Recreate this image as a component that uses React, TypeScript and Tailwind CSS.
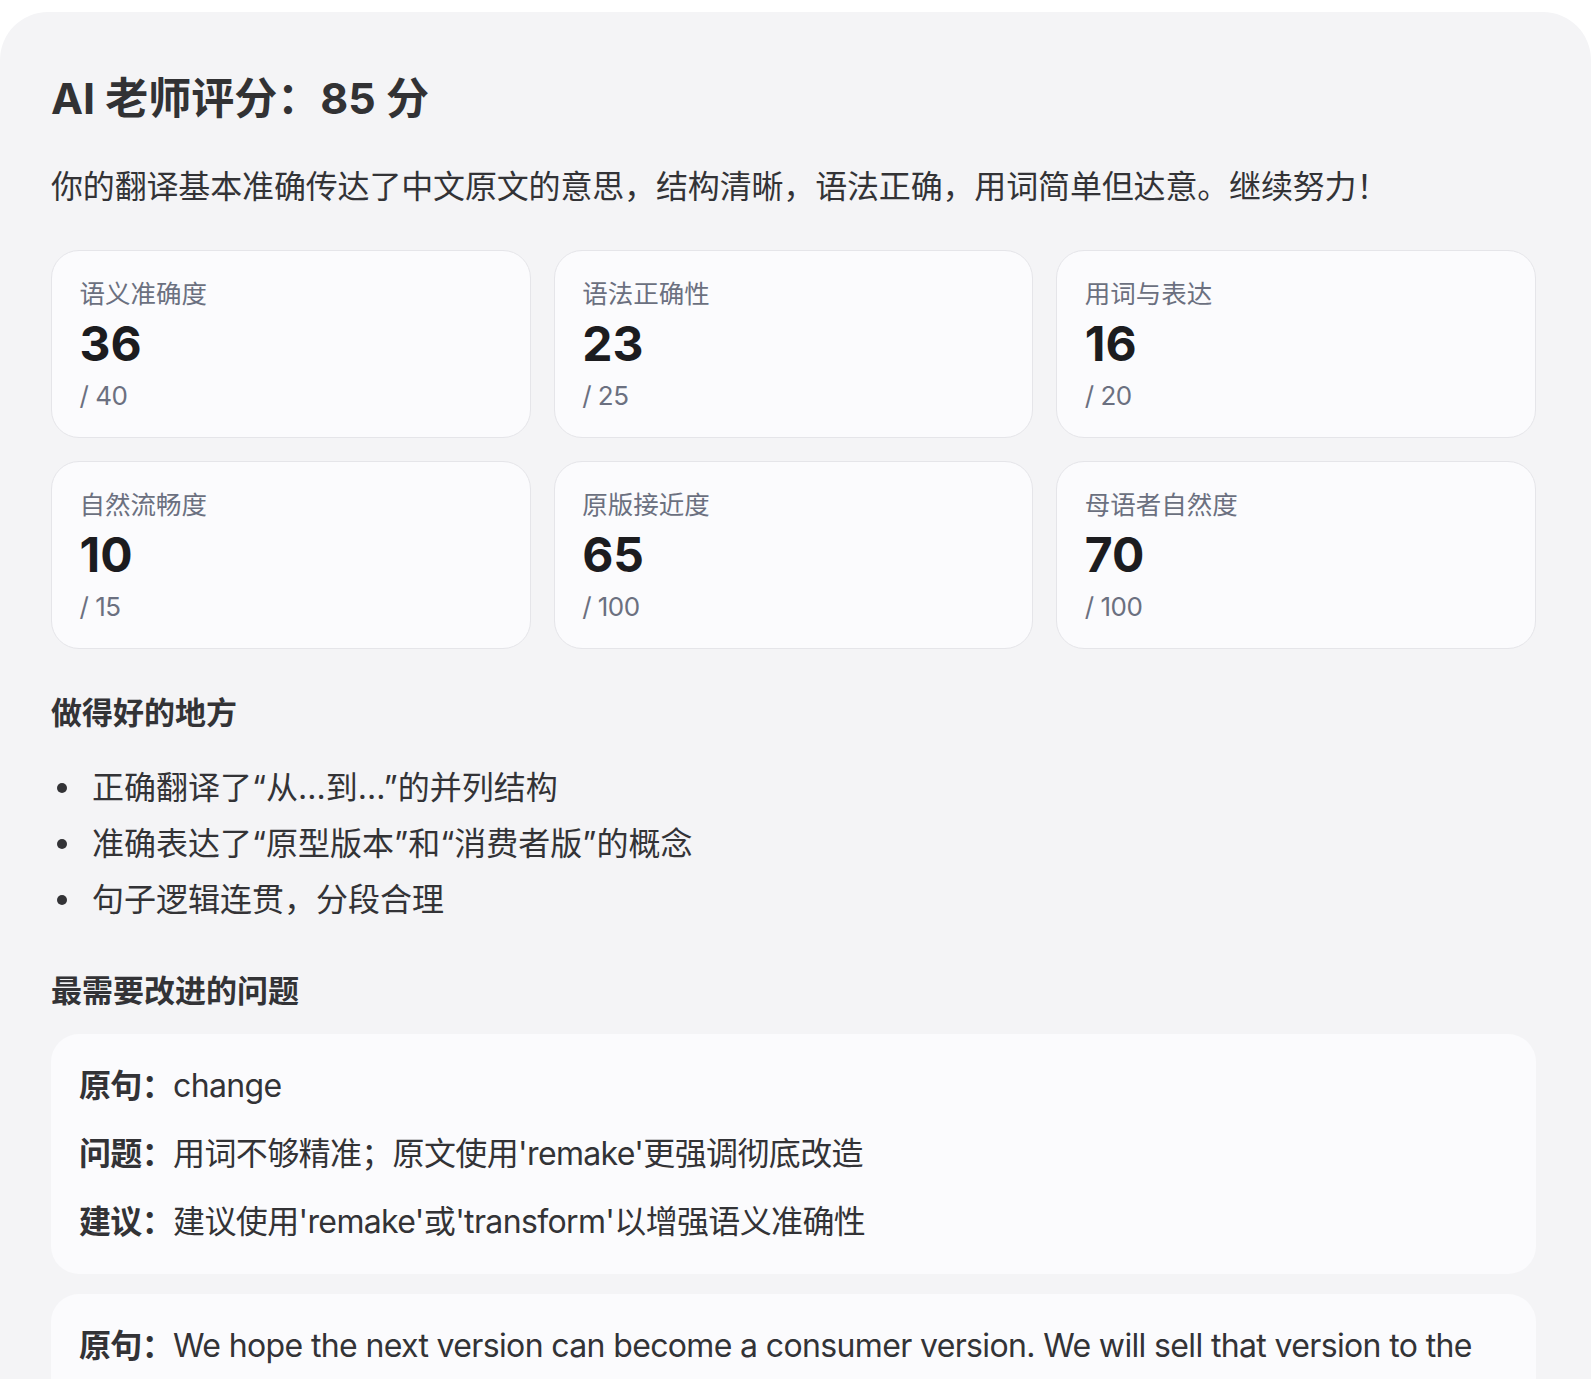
import React from "react";

type Metric = { label: string; score: number; max: number };

const metrics: Metric[] = [
  { label: "语义准确度", score: 36, max: 40 },
  { label: "语法正确性", score: 23, max: 25 },
  { label: "用词与表达", score: 16, max: 20 },
  { label: "自然流畅度", score: 10, max: 15 },
  { label: "原版接近度", score: 65, max: 100 },
  { label: "母语者自然度", score: 70, max: 100 },
];

const strengths = [
  "正确翻译了“从...到...”的并列结构",
  "准确表达了“原型版本”和“消费者版”的概念",
  "句子逻辑连贯，分段合理",
];

const issues = [
  {
    original: "change",
    problem: "用词不够精准；原文使用'remake'更强调彻底改造",
    suggestion: "建议使用'remake'或'transform'以增强语义准确性",
  },
  {
    original:
      "We hope the next version can become a consumer version. We will sell that version to the public.",
    problem: "句子之间衔接略显生硬，可适当合并",
    suggestion: "建议改为'We hope the next version will be a consumer version that we can sell to the public.'",
  },
];

const MetricCard = ({ metric }: { metric: Metric }) => (
  <div className="rounded-[28px] border-[1.5px] border-[#e5e5e9] bg-[#fbfbfd] px-[27.5px] pt-[22.5px] pb-[21.5px]">
    <div className="text-[25.5px] leading-[40px] text-[#6b7080]">{metric.label}</div>
    <div className="mt-[1px] text-[48px] font-bold leading-[58px] text-[#1c1c1f]">{metric.score}</div>
    <div className="mt-[3px] text-[26px] leading-[40px] tracking-[-0.02em] text-[#6b7080]">/ {metric.max}</div>
  </div>
);

const App = () => {
  return (
    <div
      className="min-h-screen bg-white pt-[12px]"
      style={{ fontFamily: '"Inter", "Noto Sans CJK SC", sans-serif' }}
    >
      <div className="rounded-[48px] bg-[#f4f4f6] pl-[51px] pr-[55px] pt-[60px] pb-[60px] text-[#333336]">
        {/* Header */}
        <h1 className="text-[43px] font-bold leading-[52px] text-[#323234]">AI 老师评分：85 分</h1>
        <p className="mt-[39px] text-[32px] leading-[48px] tracking-[-0.005em]">
          你的翻译基本准确传达了中文原文的意思，结构清晰，语法正确，用词简单但达意。继续努力！
        </p>

        {/* Score breakdown */}
        <div className="mt-[39px] grid grid-cols-3 gap-[23px]">
          {metrics.map((m) => (
            <MetricCard key={m.label} metric={m} />
          ))}
        </div>

        {/* Strengths */}
        <h2 className="mt-[40px] text-[31px] font-bold leading-[48px]">做得好的地方</h2>
        <ul className="mt-[23px] flex flex-col text-[32px] leading-[56px]">
          {strengths.map((s) => (
            <li key={s} className="flex items-center">
              <span className="ml-[6px] mr-[25px] h-[10px] w-[10px] shrink-0 rounded-full bg-[#333336]" />
              <span>{s}</span>
            </li>
          ))}
        </ul>

        {/* Issues */}
        <h2 className="mt-[39px] text-[31px] font-bold leading-[48px]">最需要改进的问题</h2>
        <div className="mt-[19px] flex flex-col gap-[20px]">
          {issues.map((issue, i) => (
            <div
              key={i}
              className="flex flex-col gap-[12px] rounded-[28px] bg-[#fbfbfd] px-[28px] py-[24px] text-[32px] leading-[56px] tracking-[-0.02em]"
            >
              <p>
                <span className="font-bold">原句：</span>
                {issue.original}
              </p>
              <p>
                <span className="font-bold">问题：</span>
                {issue.problem}
              </p>
              <p>
                <span className="font-bold">建议：</span>
                {issue.suggestion}
              </p>
            </div>
          ))}
        </div>
      </div>
    </div>
  );
};

export default App;
